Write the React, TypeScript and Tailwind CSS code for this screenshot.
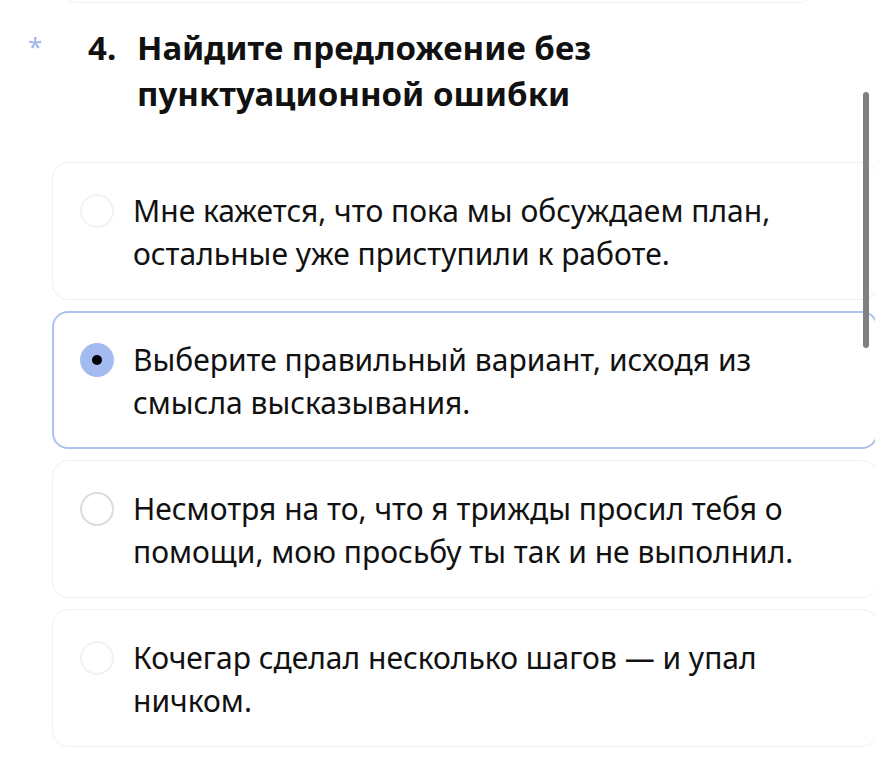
const options = [
  'Мне кажется, что пока мы обсуждаем план, остальные уже приступили к работе.',
  'Выберите правильный вариант, исходя из смысла высказывания.',
  'Несмотря на то, что я трижды просил тебя о помощи, мою просьбу ты так и не выполнил.',
  'Кочегар сделал несколько шагов — и упал ничком.',
]

export default function App() {
  const selected = 1

  return (
    <div className="relative h-[763px] w-[875px] overflow-hidden bg-white font-['Noto_Sans',sans-serif] text-[#111]">
      {/* previous card bottom edge */}
      <div className="mx-[60px] -mt-[20px] h-[23px] rounded-b-2xl border border-[#f0f0f0]" />

      {/* question */}
      <div className="flex pt-[22px] pl-[28px]">
        <span className="w-[60px] pt-[8px] text-[26px] leading-[26px] text-[#9fb6ec]">*</span>
        <h2 className="flex text-[33px] font-bold leading-[46px]">
          <span className="w-[49px]">4.</span>
          <span className="w-[520px]">Найдите предложение без пунктуационной ошибки</span>
        </h2>
      </div>

      {/* options */}
      <div className="mt-[45px] ml-[52px] flex w-[826px] flex-col gap-[11px]">
        {options.map((text, i) => {
          const on = i === selected
          return (
            <div
              key={i}
              className={
                on
                  ? 'flex h-[138px] items-start gap-[19px] rounded-2xl border-2 border-[#aec2f0] px-[26px] pt-[25px]'
                  : 'flex h-[138px] items-start gap-[19px] rounded-2xl border border-[#f0f0f2] px-[27px] pt-[26px]'
              }
            >
              <div className="flex h-[43px] items-center">
                {on ? (
                  <div className="flex h-[34px] w-[34px] items-center justify-center rounded-full bg-[#a3bbf0]">
                    <div className="h-[10px] w-[10px] rounded-full bg-black" />
                  </div>
                ) : (
                  <div
                    className={
                      i === 2
                        ? 'h-[34px] w-[34px] rounded-full border-2 border-[#dcdcdc]'
                        : 'h-[34px] w-[34px] rounded-full border-2 border-[#f2f2f2]'
                    }
                  />
                )}
              </div>
              <p className="w-[680px] text-[30px] leading-[43px]">{text}</p>
            </div>
          )
        })}
      </div>

      {/* scrollbar */}
      <div className="absolute top-[92px] left-[863px] h-[256px] w-[6px] rounded-full bg-[#808080]" />
    </div>
  )
}
